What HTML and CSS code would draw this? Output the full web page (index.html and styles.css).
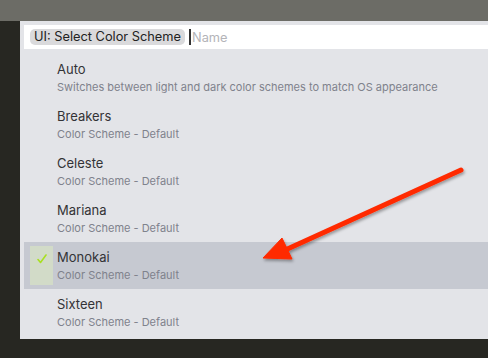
FILE: index.html
```html
<!DOCTYPE html>
<html>
<head>
<meta charset="utf-8">
<link rel="stylesheet" href="styles.css">
</head>
<body>
<div class="topbar"></div>
<div class="main">
  <div class="side"></div>
  <div class="panel">
    <div class="input">
      <span class="chip">UI: Select Color Scheme</span>
      <span class="cursor"></span>
      <span class="placeholder">Name</span>
    </div>
    <div class="list">
      <div class="row">
        <div class="mark"></div>
        <div class="texts"><div class="title">Auto</div><div class="sub">Switches between light and dark color schemes to match OS appearance</div></div>
      </div>
      <div class="row">
        <div class="mark"></div>
        <div class="texts"><div class="title">Breakers</div><div class="sub">Color Scheme - Default</div></div>
      </div>
      <div class="row">
        <div class="mark"></div>
        <div class="texts"><div class="title">Celeste</div><div class="sub">Color Scheme - Default</div></div>
      </div>
      <div class="row">
        <div class="mark"></div>
        <div class="texts"><div class="title">Mariana</div><div class="sub">Color Scheme - Default</div></div>
      </div>
      <div class="row selected">
        <div class="mark checked">
          <svg class="check" width="10" height="10" viewBox="0 0 10 10"><polyline points="1,5.5 3.5,8.5 9,1" fill="none" stroke="#a8e020" stroke-width="1.6" stroke-linecap="round" stroke-linejoin="round"/></svg>
        </div>
        <div class="texts"><div class="title">Monokai</div><div class="sub">Color Scheme - Default</div></div>
      </div>
      <div class="row">
        <div class="mark"></div>
        <div class="texts"><div class="title">Sixteen</div><div class="sub">Color Scheme - Default</div></div>
      </div>
    </div>
  </div>
</div>
<svg class="arrow" width="488" height="358" viewBox="0 0 488 358">
  <defs>
    <filter id="sh" x="-20%" y="-20%" width="140%" height="140%">
      <feDropShadow dx="1" dy="2" stdDeviation="1.5" flood-color="#000" flood-opacity="0.35"/>
    </filter>
  </defs>
  <g filter="url(#sh)" fill="#ff2a00" stroke="#ff2a00">
    <line x1="461" y1="170" x2="283" y2="251" stroke-width="5" stroke-linecap="round"/>
    <polygon points="263,258 282,238 292,259" stroke-width="1" stroke-linejoin="round"/>
  </g>
</svg>
</body>
</html>
```
FILE: styles.css
```css
html, body {
  margin: 0;
  padding: 0;
}
body {
  width: 488px;
  height: 358px;
  overflow: hidden;
  background: #272722;
  font-family: Inter, "Noto Sans", sans-serif;
  position: relative;
}
.topbar {
  height: 21px;
  background: #6c6c66;
}
.main {
  display: flex;
}
.side {
  width: 20px;
  flex: none;
}
.panel {
  flex: 1;
  background: #e3e4e8;
  padding: 4px 0 3px 4px;
  height: 311px;
}
.input {
  height: 24px;
  background: #ffffff;
  display: flex;
  align-items: center;
  padding-left: 6px;
}
.chip {
  background: #dadadc;
  border-radius: 5px;
  font-size: 12.8px;
  color: #222;
  height: 16px;
  line-height: 16px;
  padding: 0 4px;
}
.cursor {
  width: 2px;
  height: 16px;
  background: #333;
  margin-left: 4px;
}
.placeholder {
  font-size: 12.8px;
  color: #b4b4b8;
  margin-left: 1px;
}
.list {
  margin-top: 5px;
}
.row {
  height: 47px;
  display: flex;
  align-items: center;
}
.row.selected {
  background: #c6c9d1;
}
.mark {
  width: 23px;
  height: 39px;
  margin-left: 6px;
  margin-right: 4px;
  flex: none;
}
.mark.checked {
  background: #d2dbc8;
  display: flex;
  justify-content: center;
  align-items: flex-start;
  padding-top: 8px;
  box-sizing: border-box;
}
.check {
  display: block;
}
.texts {
  display: flex;
  flex-direction: column;
}
.title {
  font-size: 13px;
  color: #333336;
  line-height: 17px;
  margin-top: 1px;
}
.sub {
  font-size: 11px;
  color: #7f828c;
  line-height: 16px;
  margin-top: 1px;
}
.arrow {
  position: absolute;
  left: 0;
  top: 0;
}
```
